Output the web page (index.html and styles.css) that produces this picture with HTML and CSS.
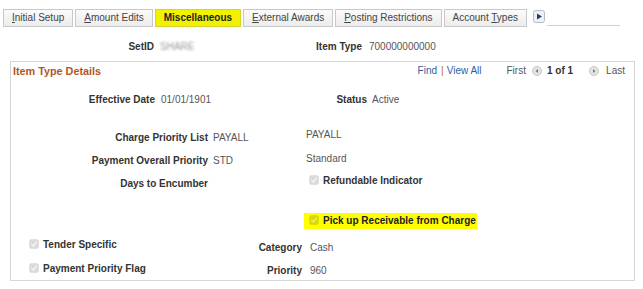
FILE: index.html
```html
<!DOCTYPE html>
<html>
<head>
<meta charset="utf-8">
<link rel="stylesheet" href="styles.css">
</head>
<body>
<div class="tabs">
  <div class="tab"><u>I</u>nitial Setup</div>
  <div class="tab"><u>A</u>mount Edits</div>
  <div class="tab active">Miscellaneous</div>
  <div class="tab"><u>E</u>xternal Awards</div>
  <div class="tab"><u>P</u>osting Restrictions</div>
  <div class="tab">Account <u>T</u>ypes</div>
  <svg class="next" width="12" height="13" viewBox="0 0 12 13"><rect x="0.5" y="0.5" width="11" height="12" rx="2" fill="#eef0f4" stroke="#b4bccb"/><polygon points="4,3.5 9,6.5 4,9.5" fill="#1d3c78"/></svg>
  <div class="tabline"></div>
</div>

<div class="keyrow">
  <span class="lbl setid-l">SetID</span><span class="val setid-v"><span class="blur">SHARE</span></span>
  <span class="lbl itemtype-l">Item Type</span><span class="val itemtype-v">700000000000</span>
</div>

<div class="panel">
  <div class="phead">
    <span class="ptitle">Item Type Details</span>
    <div class="pnav">
      <span class="link">Find</span><span class="sep">|</span><span class="link viewall">View All</span>
      <span class="navtxt">First</span>
      <svg class="circ c1" width="10" height="10" viewBox="0 0 10 10"><circle cx="5" cy="5" r="4.5" fill="#e4e4e4" stroke="#c6c6c6"/><polygon points="6,3 3.5,5 6,7" fill="#7a7a7a"/></svg>
      <span class="count">1 of 1</span>
      <svg class="circ c2" width="10" height="10" viewBox="0 0 10 10"><circle cx="5" cy="5" r="4.5" fill="#e4e4e4" stroke="#c6c6c6"/><polygon points="4,3 6.5,5 4,7" fill="#7a7a7a"/></svg>
      <span class="navtxt">Last</span>
    </div>
  </div>

  <div class="row1">
    <span class="lbl eff-l">Effective Date</span><span class="val eff-v">01/01/1901</span>
    <span class="lbl status-l">Status</span><span class="val status-v">Active</span>
  </div>

  <div class="mid">
    <div class="midl">
      <div class="lrow"><span class="lbl mid-lbl">Charge Priority List</span><span class="val mid-val">PAYALL</span></div>
      <div class="lrow"><span class="lbl mid-lbl">Payment Overall Priority</span><span class="val mid-val">STD</span></div>
      <div class="lrow"><span class="lbl mid-lbl">Days to Encumber</span></div>
    </div>
    <div class="midr">
      <div class="rrow r1"><span class="val">PAYALL</span></div>
      <div class="rrow r2"><span class="val">Standard</span></div>
      <div class="rrow r3 cb">
        <svg class="box" width="10" height="10" viewBox="0 0 10 10"><rect x="0.5" y="0.5" width="9" height="9" rx="1.5" fill="rgba(0,0,0,0.14)" stroke="rgba(0,0,0,0.05)"/><path d="M2.3 5.2 L4.2 7 L7.8 2.8" fill="none" stroke="rgba(255,255,255,0.7)" stroke-width="1.4"/></svg>
        <span class="lbl">Refundable Indicator</span>
      </div>
      <div class="rrow r4">
        <span class="hl">
          <svg class="box" width="10" height="10" viewBox="0 0 10 10"><rect x="0.5" y="0.5" width="9" height="9" rx="1.5" fill="rgba(0,0,0,0.14)" stroke="rgba(0,0,0,0.05)"/><path d="M2.3 5.2 L4.2 7 L7.8 2.8" fill="none" stroke="rgba(255,255,255,0.5)" stroke-width="1.4"/></svg>
          <span class="lbl hl-text">Pick up Receivable from Charge</span>
        </span>
      </div>
    </div>
  </div>

  <div class="bottom">
    <div class="botl">
      <div class="brow cb">
        <svg class="box" width="10" height="10" viewBox="0 0 10 10"><rect x="0.5" y="0.5" width="9" height="9" rx="1.5" fill="rgba(0,0,0,0.14)" stroke="rgba(0,0,0,0.05)"/><path d="M2.3 5.2 L4.2 7 L7.8 2.8" fill="none" stroke="rgba(255,255,255,0.7)" stroke-width="1.4"/></svg>
        <span class="lbl">Tender Specific</span>
      </div>
      <div class="brow cb">
        <svg class="box" width="10" height="10" viewBox="0 0 10 10"><rect x="0.5" y="0.5" width="9" height="9" rx="1.5" fill="rgba(0,0,0,0.14)" stroke="rgba(0,0,0,0.05)"/><path d="M2.3 5.2 L4.2 7 L7.8 2.8" fill="none" stroke="rgba(255,255,255,0.7)" stroke-width="1.4"/></svg>
        <span class="lbl">Payment Priority Flag</span>
      </div>
    </div>
    <div class="botr">
      <div class="brow2"><span class="lbl bot-lbl">Category</span><span class="val bot-val">Cash</span></div>
      <div class="brow2"><span class="lbl bot-lbl">Priority</span><span class="val bot-val">960</span></div>
    </div>
  </div>
</div>
</body>
</html>
```

FILE: styles.css
```css
body {
  margin: 0;
  font-family: "Liberation Sans", Arial, sans-serif;
  font-size: 10px;
  color: #333;
  background: #fff;
}

/* tabs */
.tabs {
  display: flex;
  align-items: flex-start;
  padding: 9px 0 0 3px;
  height: 18px;
}
.tab {
  height: 16px;
  line-height: 16px;
  padding: 0 8px;
  border: 1px solid #c8c8c8;
  background: linear-gradient(#fbfbfb, #ececec);
  color: #444;
  margin-right: 2px;
  white-space: nowrap;
}
.tab.active {
  background: #f2f200;
  border-color: #d4d42c;
  font-weight: bold;
  color: #222;
}
.next {
  display: block;
  margin: 1px 0 0 4px;
}
.tabline {
  width: 73px;
  height: 16px;
  border-bottom: 1px solid #c9d3de;
  margin-left: 2px;
}

/* key row */
.keyrow {
  display: flex;
  margin-top: 13px;
  height: 14px;
  line-height: 14px;
}
.lbl {
  font-weight: bold;
  color: #333;
  white-space: nowrap;
}
.val {
  color: #555;
  white-space: nowrap;
}
.setid-l { width: 154px; text-align: right; }
.setid-v { margin-left: 6px; width: 100px; }
.itemtype-l { width: 102px; text-align: right; }
.itemtype-v { margin-left: 7px; }
.blur {
  display: inline-block;
  color: #9a9a9a;
  filter: blur(1.2px);
}

/* panel */
.panel {
  margin: 7px 0 0 10px;
  width: 625px;
  height: 220px;
  box-sizing: border-box;
  border: 1px solid #d6d6d6;
}
.phead {
  display: flex;
  align-items: center;
  height: 17px;
  padding: 0 9px 0 2px;
}
.ptitle {
  font-size: 10.8px;
  font-weight: bold;
  color: #b3561f;
}
.pnav {
  margin-left: auto;
  display: flex;
  align-items: center;
}
.link { color: #2e5e9e; }
.sep { color: #c0661c; margin: 0 3px 0 4px; }
.viewall { margin-right: 25px; }
.navtxt { color: #555; }
.circ { display: block; }
.c1 { margin: 0 5px 0 6px; }
.c2 { margin: 0 7px 0 16px; }
.count { font-weight: bold; color: #333; }

/* row 1 */
.row1 {
  display: flex;
  margin-top: 14px;
  height: 14px;
  line-height: 14px;
}
.eff-l { width: 144px; text-align: right; }
.eff-v { margin-left: 6px; width: 99px; }
.status-l { width: 107px; text-align: right; }
.status-v { margin-left: 5px; }

/* middle */
.mid {
  display: flex;
  margin-top: 21px;
}
.midl {
  width: 295px;
  padding-top: 3px;
}
.lrow {
  display: flex;
  height: 14px;
  line-height: 14px;
  margin-bottom: 9px;
}
.mid-lbl { width: 197px; text-align: right; }
.mid-val { margin-left: 5px; }

.midr { flex: 1; }
.rrow {
  display: flex;
  align-items: center;
  height: 14px;
  line-height: 14px;
}
.r1 { margin-bottom: 10px; }
.r2 { margin-bottom: 8px; }
.r3 { margin-bottom: 25px; }
.r4 { height: 16px; }

.cb .box {
  display: block;
  flex: none;
  margin: 0 4px 3px 0;
}
.r3 .box { margin-left: 3px; }

.hl {
  display: flex;
  align-items: center;
  height: 16px;
  margin-left: -2px;
  padding: 0 1px 0 5px;
  background: #ffff00;
}
.hl .box {
  display: block;
  margin: 0 4px 2px 0;
}
.hl-text { color: #222; }

/* bottom */
.bottom {
  display: flex;
  margin-top: 9px;
}
.botl {
  width: 182px;
  padding-left: 18px;
}
.brow {
  display: flex;
  align-items: center;
  height: 14px;
  line-height: 14px;
  margin-bottom: 10px;
}
.botr { padding-top: 3px; }
.brow2 {
  display: flex;
  height: 14px;
  line-height: 14px;
  margin-bottom: 9px;
}
.bot-lbl { width: 91px; text-align: right; }
.bot-val { margin-left: 8px; }
```
